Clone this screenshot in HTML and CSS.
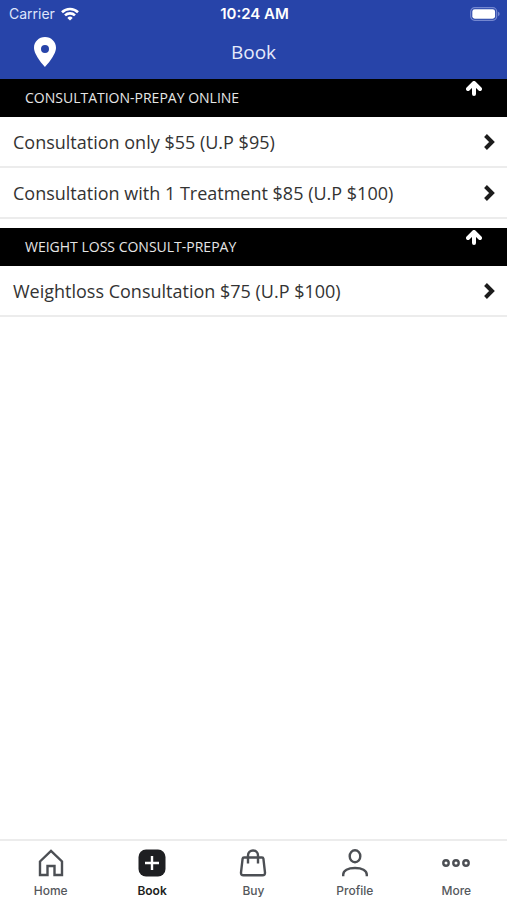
FILE: index.html
```
<!DOCTYPE html>
<html lang="en">
<head>
  <meta charset="UTF-8">
  <meta name="viewport" content="width=device-width, initial-scale=1">
  <title>Book</title>
  <link rel="stylesheet" href="styles.css">
</head>
<body>
  <header class="top">
    <div class="status">
      <div class="carrier">
        <span>Carrier</span>
        <svg width="18" height="14" viewBox="0 0 18 14" fill="none" stroke="#fff" stroke-width="2.6">
          <path d="M1 5.2a11.5 11.5 0 0 1 16 0"/>
          <path d="M4 8.4a7.2 7.2 0 0 1 10 0"/>
          <path d="M9 13.6L6.3 10.9a3.9 3.9 0 0 1 5.4 0z" fill="#fff" stroke="none"/>
        </svg>
      </div>
      <time class="clock">10:24 AM</time>
      <svg class="battery" width="30" height="14" viewBox="0 0 30 14">
        <rect x="0.7" y="0.7" width="26" height="12.6" rx="4" fill="none" stroke="#7487d0" stroke-width="1.2"/>
        <rect x="2.3" y="2.3" width="22.8" height="9.4" rx="2.4" fill="#fff"/>
        <path d="M28 4.8v4.4q1.7-.6 1.7-2.2t-1.7-2.2z" fill="#7487d0"/>
      </svg>
    </div>
    <div class="titlebar">
      <button class="pin" aria-label="Locations">
        <svg width="24" height="32" viewBox="0 0 24 32">
          <path fill="#fff" fill-rule="evenodd" d="M12 1C5.8 1 1 5.8 1 11.8 1 19.5 12 31 12 31s11-11.5 11-19.2C23 5.8 18.2 1 12 1zm0 8a4 4 0 1 1 0 8 4 4 0 0 1 0-8z"/>
        </svg>
      </button>
      <h1>Book</h1>
    </div>
  </header>

  <main>
    <section>
      <button class="group">
        <span>CONSULTATION-PREPAY ONLINE</span>
        <svg class="up" width="16" height="15" viewBox="0 0 16 15"><path d="M8 13V3M2 8l6-6 6 6"/></svg>
      </button>
      <a class="row" href="#">
        <span>Consultation only $55 (U.P $95)</span>
        <svg class="next" width="12" height="16" viewBox="0 0 12 16"><path d="M2.5 1.5L9 8l-6.5 6.5"/></svg>
      </a>
      <a class="row" href="#">
        <span>Consultation with 1 Treatment $85 (U.P $100)</span>
        <svg class="next" width="12" height="16" viewBox="0 0 12 16"><path d="M2.5 1.5L9 8l-6.5 6.5"/></svg>
      </a>
    </section>
    <section>
      <button class="group">
        <span>WEIGHT LOSS CONSULT-PREPAY</span>
        <svg class="up" width="16" height="15" viewBox="0 0 16 15"><path d="M8 13V3M2 8l6-6 6 6"/></svg>
      </button>
      <a class="row" href="#">
        <span>Weightloss Consultation $75 (U.P $100)</span>
        <svg class="next" width="12" height="16" viewBox="0 0 12 16"><path d="M2.5 1.5L9 8l-6.5 6.5"/></svg>
      </a>
    </section>
  </main>

  <nav class="tabs">
    <a class="tab" href="#">
      <svg width="28" height="28" viewBox="0 0 28 28"><path d="M3 12.5L14 2l11 10.5V26h-7.5v-9h-7v9H3z"/></svg>
      <span>Home</span>
    </a>
    <a class="tab active" href="#">
      <svg width="28" height="28" viewBox="0 0 28 28">
        <rect x="0.5" y="0.5" width="27" height="27" rx="7.5" fill="#1e1f22" stroke="none"/>
        <path d="M14 7v14M7 14h14" stroke="#fff"/>
      </svg>
      <span>Book</span>
    </a>
    <a class="tab" href="#">
      <svg width="28" height="28" viewBox="0 0 28 28"><path d="M5 8.500h18q1.200 0 1.400 1.200L26 23.500q.2 2.800-2.500 2.800h-19Q1.800 26.300 2 23.500L3.600 9.700Q3.800 8.500 5 8.500zM9 14.500v-8a5 5 0 0 1 10 0v8"/></svg>
      <span>Buy</span>
    </a>
    <a class="tab" href="#">
      <svg width="28" height="28" viewBox="0 0 28 28"><ellipse cx="14" cy="7.2" rx="5.3" ry="6"/><path d="M2.200 27.300v-1.500C2.200 21.500 7 19 14 19s11.800 2.500 11.800 6.800v1.500"/></svg>
      <span>Profile</span>
    </a>
    <a class="tab" href="#">
      <svg width="28" height="28" viewBox="0 0 28 28"><circle cx="4" cy="14" r="2.7"/><circle cx="14" cy="14" r="2.7"/><circle cx="24" cy="14" r="2.7"/></svg>
      <span>More</span>
    </a>
  </nav>
</body>
</html>
```
FILE: styles.css
```
* { box-sizing: border-box; }
body { margin: 0; min-height: 100vh; display: flex; flex-direction: column; background: #fff; color: #333; font-family: "Open Sans", "Noto Sans", sans-serif; }
button { border: 0; padding: 0; font: inherit; cursor: pointer; }
a { color: inherit; text-decoration: none; }
svg { display: block; flex: none; }

.top { background: #2744a9; color: #fff; }
.status { display: grid; grid-template-columns: 1fr auto 1fr; align-items: center; height: 27px; padding: 0 7px 0 9px; font: 14px/16px Inter, sans-serif; }
.carrier { display: flex; align-items: center; gap: 6px; color: #dfe5fb; }
.clock { font-size: 15px; font-weight: 600; }
.battery { justify-self: end; }
.titlebar { display: grid; grid-template-columns: 1fr auto 1fr; align-items: center; height: 52px; padding: 0 33px 2px; }
.pin { justify-self: start; background: none; }
h1 { margin: 0; font-size: 19px; line-height: 26px; font-weight: 400; color: #e6eafb; }

main { flex: 1; }
section { margin-bottom: 9px; }
.group { display: flex; align-items: center; justify-content: space-between; width: 100%; height: 38px; padding: 0 25px; background: #000; color: #e6e6e6; font-size: 14px; line-height: 20px; text-align: left; }
.up { align-self: flex-start; margin-top: 2px; fill: none; stroke: #fff; stroke-width: 4; stroke-linecap: round; stroke-linejoin: round; }
.row { display: flex; align-items: center; justify-content: space-between; height: 51px; padding: 0 12px 0 13px; border-bottom: 2px solid #ececec; font-size: 18px; line-height: 26px; }
.next { fill: none; stroke: #1c1c1c; stroke-width: 4; }

.tabs { position: sticky; bottom: 0; display: grid; grid-template-columns: repeat(5, 1fr); height: 61px; padding-top: 8px; border-top: 2px solid #ececec; background: #fff; }
.tab { display: flex; flex-direction: column; align-items: center; gap: 6px; color: #55585c; font: 500 12px/16px Inter, sans-serif; }
.tab svg { fill: none; stroke: #4c4f54; stroke-width: 2.4; }
.tab.active { color: #1e1f22; font-weight: 600; }
```
